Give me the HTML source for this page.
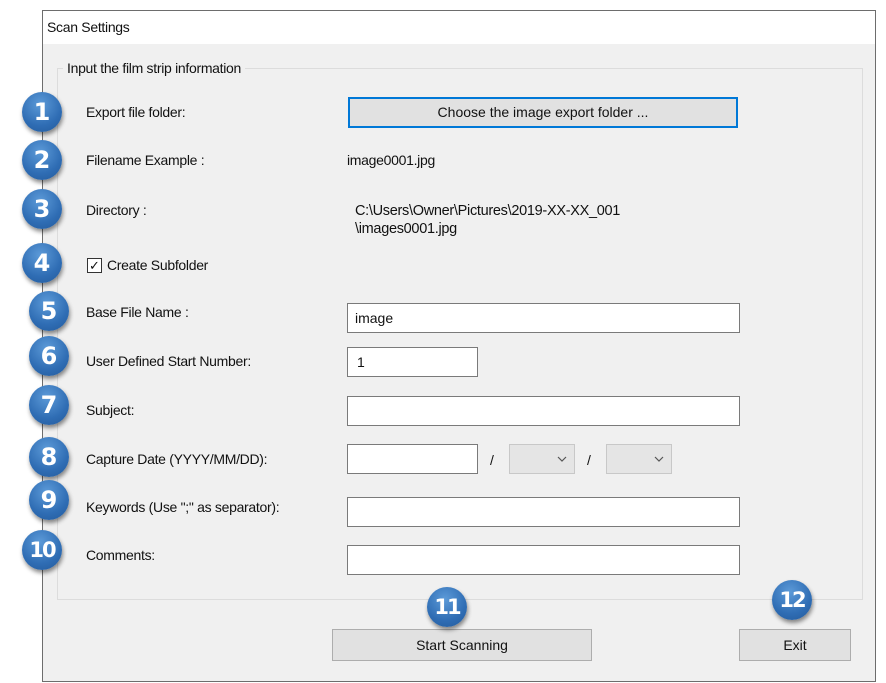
<!DOCTYPE html>
<html><head><style>
body{margin:0;width:886px;height:683px;background:#fff;position:relative;overflow:hidden;font-family:"Liberation Sans",sans-serif;font-size:14px;color:#111}
.a{position:absolute}
.win{left:42px;top:10px;width:832px;height:670px;border:1px solid #6d6d6d;background:#f0f0f0}
.title{left:43px;top:11px;width:832px;height:33px;background:#fff}
.grp{left:57px;top:68px;width:804px;height:530px;border:1px solid #dcdcdc}
.lbl{font-size:14px;letter-spacing:-0.3px}
.in{background:#fff;border:1px solid #7a7a7a;box-sizing:border-box}
.btn{background:#e1e1e1;border:1px solid #adadad;box-sizing:border-box;text-align:center;font-size:14px}
.dd{background:#e5e5e5;border:1px solid #c8c8c8;box-sizing:border-box}
.b{width:40px;height:40px;border-radius:50%;background:radial-gradient(circle at 45% 30%,#5c9ad8,#2f6db4 60%,#23599a);box-shadow:1px 3px 4px rgba(0,0,0,.45);color:#fff;font-weight:bold;font-size:24px;text-align:center;line-height:40px;font-family:"DejaVu Sans","Liberation Sans",sans-serif}
</style></head><body>
<div class="a win"></div>
<div class="a title"></div>
<div class="a lbl" style="left:47px;top:19px">Scan Settings</div>
<div class="a grp"></div>
<div class="a lbl" style="left:63px;top:60px;background:#f0f0f0;padding:0 4px">Input the film strip information</div>

<div class="a lbl" style="left:86px;top:104px">Export file folder:</div>
<div class="a btn" style="left:348px;top:97px;width:390px;height:31px;border:2px solid #0078d7;line-height:27px">Choose the image export folder ...</div>
<div class="a lbl" style="left:86px;top:152px">Filename Example :</div>
<div class="a lbl" style="left:347px;top:152px">image0001.jpg</div>
<div class="a lbl" style="left:86px;top:202px">Directory :</div>
<div class="a lbl" style="left:355px;top:202px;line-height:18px;font-size:14.5px">C:\Users\Owner\Pictures\2019-XX-XX_001<br>\images0001.jpg</div>
<div class="a" style="left:87px;top:258px;width:13px;height:13px;border:1px solid #333;background:#fff;font-size:13px;line-height:13px;text-align:center">✓</div>
<div class="a lbl" style="left:107px;top:257px">Create Subfolder</div>
<div class="a lbl" style="left:86px;top:304px">Base File Name :</div>
<div class="a in" style="left:347px;top:303px;width:393px;height:30px;padding:6px 7px">image</div>
<div class="a lbl" style="left:86px;top:353px">User Defined Start Number:</div>
<div class="a in" style="left:347px;top:347px;width:131px;height:30px;padding:6px 9px">1</div>
<div class="a lbl" style="left:86px;top:402px">Subject:</div>
<div class="a in" style="left:347px;top:396px;width:393px;height:30px"></div>
<div class="a lbl" style="left:86px;top:451px">Capture Date (YYYY/MM/DD):</div>
<div class="a in" style="left:347px;top:444px;width:131px;height:30px"></div>
<div class="a lbl" style="left:490px;top:452px">/</div>
<div class="a dd" style="left:509px;top:444px;width:66px;height:30px"><svg class="a" style="left:47px;top:11px" width="10" height="6"><path d="M1 1L5 5L9 1" fill="none" stroke="#555" stroke-width="1.2"/></svg></div>
<div class="a lbl" style="left:587px;top:452px">/</div>
<div class="a dd" style="left:606px;top:444px;width:66px;height:30px"><svg class="a" style="left:47px;top:11px" width="10" height="6"><path d="M1 1L5 5L9 1" fill="none" stroke="#555" stroke-width="1.2"/></svg></div>
<div class="a lbl" style="left:86px;top:499px">Keywords (Use ";" as separator):</div>
<div class="a in" style="left:347px;top:497px;width:393px;height:30px"></div>
<div class="a lbl" style="left:86px;top:547px">Comments:</div>
<div class="a in" style="left:347px;top:545px;width:393px;height:30px"></div>

<div class="a btn" style="left:332px;top:629px;width:260px;height:32px;line-height:30px">Start Scanning</div>
<div class="a btn" style="left:739px;top:629px;width:112px;height:32px;line-height:30px">Exit</div>

<div class="a b" style="left:22px;top:92px">1</div>
<div class="a b" style="left:22px;top:140px">2</div>
<div class="a b" style="left:22px;top:189px">3</div>
<div class="a b" style="left:22px;top:243px">4</div>
<div class="a b" style="left:29px;top:291px">5</div>
<div class="a b" style="left:29px;top:336px">6</div>
<div class="a b" style="left:29px;top:385px">7</div>
<div class="a b" style="left:29px;top:437px">8</div>
<div class="a b" style="left:29px;top:480px">9</div>
<div class="a b" style="left:22px;top:530px;font-size:21px;letter-spacing:-2px">10</div>
<div class="a b" style="left:427px;top:587px;font-size:21px;letter-spacing:-2px">11</div>
<div class="a b" style="left:772px;top:580px;font-size:21px;letter-spacing:-2px">12</div>
</body></html>
